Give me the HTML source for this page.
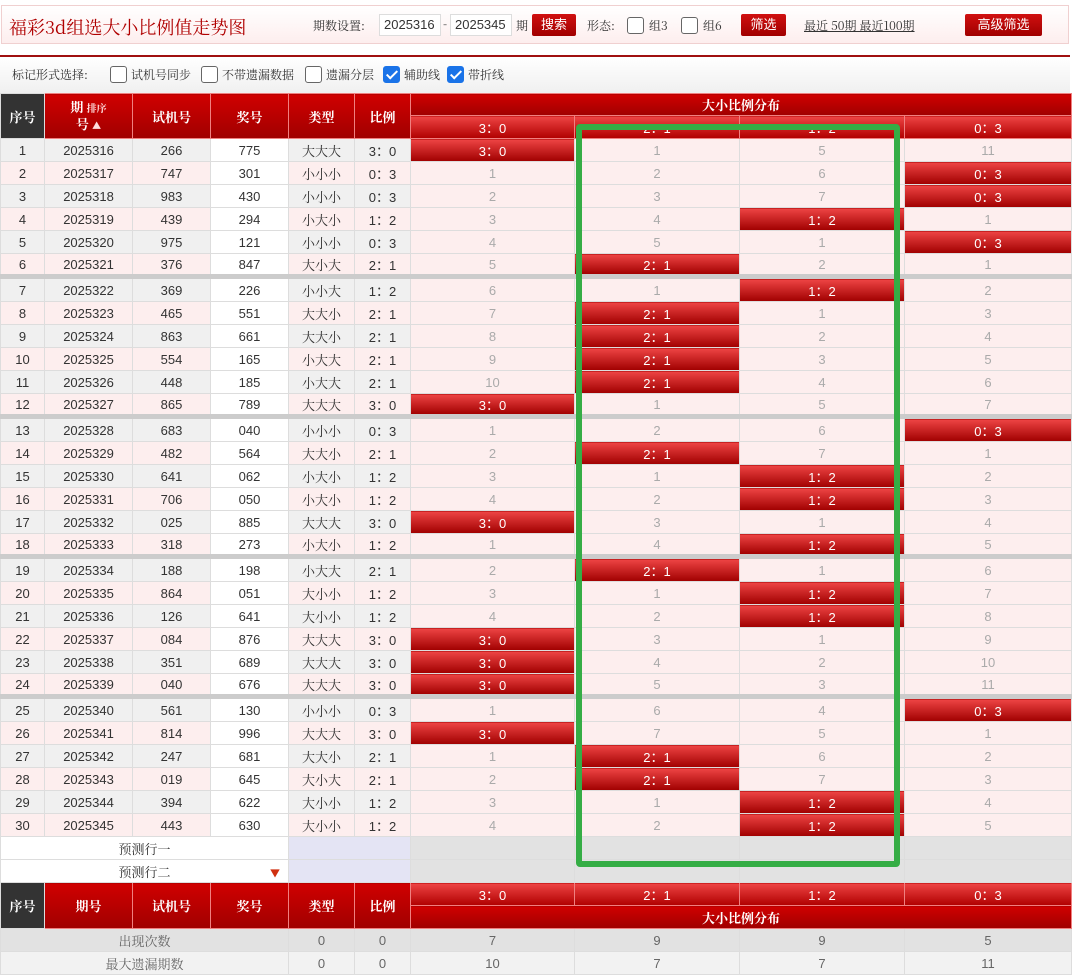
<!DOCTYPE html>
<html><head><meta charset="utf-8"><style>
*{margin:0;padding:0;box-sizing:border-box}
body{width:1080px;height:962px;overflow:hidden;background:#fff;font-family:"Liberation Sans","Noto Sans CJK SC",sans-serif;font-size:13px;color:#333;position:relative}
.top{position:absolute;left:1px;top:5px;width:1068px;height:39px;border:1px solid #f0d0d0;background:linear-gradient(#fff,#fdeeee)}
.title{position:absolute;left:7px;top:8px;font-size:18px;color:#b00000;font-family:"Noto Serif CJK SC",serif}
.t{position:absolute;top:11px;font-size:12px;color:#333;font-family:"Noto Serif CJK SC",serif}
.in{position:absolute;top:8px;height:22px;border:1px solid #ddd;background:#fff;font-size:13px;padding:2px 4px}
.btn{position:absolute;top:8px;height:22px;background:linear-gradient(#d01010,#a00000);color:#fff;font-size:13px;text-align:center;line-height:22px;border-radius:2px}
.cb{position:absolute;width:17px;height:17px;border:1px solid #666;border-radius:3px;background:#fff}
.cbc{background:#1a73e8;border-color:#1a73e8}
.cbc:after{content:"";position:absolute;left:5px;top:1px;width:4px;height:9px;border:solid #fff;border-width:0 2px 2px 0;transform:rotate(45deg)}
.line{position:absolute;left:0;top:55px;width:1070px;height:2px;background:#a01010}
.mark{position:absolute;left:0;top:57px;width:1070px;height:36px;background:linear-gradient(#fff,#f0f0f0)}
table{position:absolute;left:0;top:93px;border-collapse:collapse;table-layout:fixed;width:1071px}
td{height:23px;border:1px solid #ddd;text-align:center;font-size:13px;padding:0;white-space:nowrap;overflow:hidden}
.h{background:linear-gradient(#d00000,#a00000);color:#fff;font-weight:bold;font-family:"Noto Serif CJK SC",serif;border-color:#f08080}
.hs{background:#333;color:#fff;font-weight:bold;font-family:"Noto Serif CJK SC",serif}
.h2{background:linear-gradient(#ee4444,#b00000);color:#fff;font-weight:normal;border-color:#f08080}
tr.o td{background:#f0f0f0}
tr.e td{background:#fdeeee}
tr td.w{background:#fff}
tr td.d{background:#fdeeee;color:#aaa}
tr td.x{background:linear-gradient(#ee4444,#a00000);color:#fff;border-color:#ddd}
tr.s td{border-top:5px solid #ccc;height:25px}
.ty{font-family:"Noto Serif CJK SC",serif}
.p td{background:#fff}
.p td.lv{background:#e4e4f4}
.p td.g{background:#e2e2e2}
.f1 td{background:#e2e2e2;color:#666}
.f2 td{background:#f2f2f2;color:#666}
.green{position:absolute;left:576px;top:124px;width:324px;height:743px;border:6px solid #35ad45;border-radius:4px}
</style></head><body>
<div class="top">
<div class="title">福彩3d组选大小比例值走势图</div>
<div class="t" style="left:311px">期数设置:</div>
<div class="in" style="left:377px;width:62px">2025316</div>
<div class="t" style="left:441px;top:9px">-</div>
<div class="in" style="left:448px;width:62px">2025345</div>
<div class="t" style="left:514px">期</div>
<div class="btn" style="left:530px;width:44px">搜索</div>
<div class="t" style="left:585px">形态:</div>
<div class="cb" style="left:625px;top:11px"></div><div class="t" style="left:647px">组3</div>
<div class="cb" style="left:679px;top:11px"></div><div class="t" style="left:701px">组6</div>
<div class="btn" style="left:739px;width:45px">筛选</div>
<div class="t" style="left:802px;text-decoration:underline">最近 50期 最近100期</div>
<div class="btn" style="left:963px;width:77px">高级筛选</div>
</div>
<div class="line"></div>
<div class="mark">
<div class="t" style="left:12px;top:9px">标记形式选择:</div>
<div class="cb" style="left:110px;top:9px"></div><div class="t" style="left:131px;top:9px">试机号同步</div>
<div class="cb" style="left:201px;top:9px"></div><div class="t" style="left:222px;top:9px">不带遗漏数据</div>
<div class="cb" style="left:305px;top:9px"></div><div class="t" style="left:326px;top:9px">遗漏分层</div>
<div class="cb cbc" style="left:383px;top:9px"></div><div class="t" style="left:404px;top:9px">辅助线</div>
<div class="cb cbc" style="left:447px;top:9px"></div><div class="t" style="left:468px;top:9px">带折线</div>
</div>
<table>
<colgroup><col style="width:44px"><col style="width:88px"><col style="width:78px"><col style="width:78px"><col style="width:66px"><col style="width:56px"><col style="width:164px"><col style="width:165px"><col style="width:165px"><col style="width:167px"></colgroup>
<tr><td class="hs" rowspan="2">序号</td><td class="h" rowspan="2" style="line-height:16px">期 <span style="font-size:10px;color:#fdd">排序</span><br>号 <span style="font-size:9px;color:#fdd">▲</span></td><td class="h" rowspan="2">试机号</td><td class="h" rowspan="2">奖号</td><td class="h" rowspan="2">类型</td><td class="h" rowspan="2">比例</td><td class="h" colspan="4" style="height:22px">大小比例分布</td></tr>
<tr><td class="h2">3：0</td><td class="h2">2：1</td><td class="h2">1：2</td><td class="h2">0：3</td></tr>
<tr class="o"><td>1</td><td>2025316</td><td>266</td><td class="w">775</td><td class="ty">大大大</td><td>3：0</td><td class="x">3：0</td><td class="d">1</td><td class="d">5</td><td class="d">11</td></tr>
<tr class="e"><td>2</td><td>2025317</td><td>747</td><td class="w">301</td><td class="ty">小小小</td><td>0：3</td><td class="d">1</td><td class="d">2</td><td class="d">6</td><td class="x">0：3</td></tr>
<tr class="o"><td>3</td><td>2025318</td><td>983</td><td class="w">430</td><td class="ty">小小小</td><td>0：3</td><td class="d">2</td><td class="d">3</td><td class="d">7</td><td class="x">0：3</td></tr>
<tr class="e"><td>4</td><td>2025319</td><td>439</td><td class="w">294</td><td class="ty">小大小</td><td>1：2</td><td class="d">3</td><td class="d">4</td><td class="x">1：2</td><td class="d">1</td></tr>
<tr class="o"><td>5</td><td>2025320</td><td>975</td><td class="w">121</td><td class="ty">小小小</td><td>0：3</td><td class="d">4</td><td class="d">5</td><td class="d">1</td><td class="x">0：3</td></tr>
<tr class="e"><td>6</td><td>2025321</td><td>376</td><td class="w">847</td><td class="ty">大小大</td><td>2：1</td><td class="d">5</td><td class="x">2：1</td><td class="d">2</td><td class="d">1</td></tr>
<tr class="o s"><td>7</td><td>2025322</td><td>369</td><td class="w">226</td><td class="ty">小小大</td><td>1：2</td><td class="d">6</td><td class="d">1</td><td class="x">1：2</td><td class="d">2</td></tr>
<tr class="e"><td>8</td><td>2025323</td><td>465</td><td class="w">551</td><td class="ty">大大小</td><td>2：1</td><td class="d">7</td><td class="x">2：1</td><td class="d">1</td><td class="d">3</td></tr>
<tr class="o"><td>9</td><td>2025324</td><td>863</td><td class="w">661</td><td class="ty">大大小</td><td>2：1</td><td class="d">8</td><td class="x">2：1</td><td class="d">2</td><td class="d">4</td></tr>
<tr class="e"><td>10</td><td>2025325</td><td>554</td><td class="w">165</td><td class="ty">小大大</td><td>2：1</td><td class="d">9</td><td class="x">2：1</td><td class="d">3</td><td class="d">5</td></tr>
<tr class="o"><td>11</td><td>2025326</td><td>448</td><td class="w">185</td><td class="ty">小大大</td><td>2：1</td><td class="d">10</td><td class="x">2：1</td><td class="d">4</td><td class="d">6</td></tr>
<tr class="e"><td>12</td><td>2025327</td><td>865</td><td class="w">789</td><td class="ty">大大大</td><td>3：0</td><td class="x">3：0</td><td class="d">1</td><td class="d">5</td><td class="d">7</td></tr>
<tr class="o s"><td>13</td><td>2025328</td><td>683</td><td class="w">040</td><td class="ty">小小小</td><td>0：3</td><td class="d">1</td><td class="d">2</td><td class="d">6</td><td class="x">0：3</td></tr>
<tr class="e"><td>14</td><td>2025329</td><td>482</td><td class="w">564</td><td class="ty">大大小</td><td>2：1</td><td class="d">2</td><td class="x">2：1</td><td class="d">7</td><td class="d">1</td></tr>
<tr class="o"><td>15</td><td>2025330</td><td>641</td><td class="w">062</td><td class="ty">小大小</td><td>1：2</td><td class="d">3</td><td class="d">1</td><td class="x">1：2</td><td class="d">2</td></tr>
<tr class="e"><td>16</td><td>2025331</td><td>706</td><td class="w">050</td><td class="ty">小大小</td><td>1：2</td><td class="d">4</td><td class="d">2</td><td class="x">1：2</td><td class="d">3</td></tr>
<tr class="o"><td>17</td><td>2025332</td><td>025</td><td class="w">885</td><td class="ty">大大大</td><td>3：0</td><td class="x">3：0</td><td class="d">3</td><td class="d">1</td><td class="d">4</td></tr>
<tr class="e"><td>18</td><td>2025333</td><td>318</td><td class="w">273</td><td class="ty">小大小</td><td>1：2</td><td class="d">1</td><td class="d">4</td><td class="x">1：2</td><td class="d">5</td></tr>
<tr class="o s"><td>19</td><td>2025334</td><td>188</td><td class="w">198</td><td class="ty">小大大</td><td>2：1</td><td class="d">2</td><td class="x">2：1</td><td class="d">1</td><td class="d">6</td></tr>
<tr class="e"><td>20</td><td>2025335</td><td>864</td><td class="w">051</td><td class="ty">大小小</td><td>1：2</td><td class="d">3</td><td class="d">1</td><td class="x">1：2</td><td class="d">7</td></tr>
<tr class="o"><td>21</td><td>2025336</td><td>126</td><td class="w">641</td><td class="ty">大小小</td><td>1：2</td><td class="d">4</td><td class="d">2</td><td class="x">1：2</td><td class="d">8</td></tr>
<tr class="e"><td>22</td><td>2025337</td><td>084</td><td class="w">876</td><td class="ty">大大大</td><td>3：0</td><td class="x">3：0</td><td class="d">3</td><td class="d">1</td><td class="d">9</td></tr>
<tr class="o"><td>23</td><td>2025338</td><td>351</td><td class="w">689</td><td class="ty">大大大</td><td>3：0</td><td class="x">3：0</td><td class="d">4</td><td class="d">2</td><td class="d">10</td></tr>
<tr class="e"><td>24</td><td>2025339</td><td>040</td><td class="w">676</td><td class="ty">大大大</td><td>3：0</td><td class="x">3：0</td><td class="d">5</td><td class="d">3</td><td class="d">11</td></tr>
<tr class="o s"><td>25</td><td>2025340</td><td>561</td><td class="w">130</td><td class="ty">小小小</td><td>0：3</td><td class="d">1</td><td class="d">6</td><td class="d">4</td><td class="x">0：3</td></tr>
<tr class="e"><td>26</td><td>2025341</td><td>814</td><td class="w">996</td><td class="ty">大大大</td><td>3：0</td><td class="x">3：0</td><td class="d">7</td><td class="d">5</td><td class="d">1</td></tr>
<tr class="o"><td>27</td><td>2025342</td><td>247</td><td class="w">681</td><td class="ty">大大小</td><td>2：1</td><td class="d">1</td><td class="x">2：1</td><td class="d">6</td><td class="d">2</td></tr>
<tr class="e"><td>28</td><td>2025343</td><td>019</td><td class="w">645</td><td class="ty">大小大</td><td>2：1</td><td class="d">2</td><td class="x">2：1</td><td class="d">7</td><td class="d">3</td></tr>
<tr class="o"><td>29</td><td>2025344</td><td>394</td><td class="w">622</td><td class="ty">大小小</td><td>1：2</td><td class="d">3</td><td class="d">1</td><td class="x">1：2</td><td class="d">4</td></tr>
<tr class="e"><td>30</td><td>2025345</td><td>443</td><td class="w">630</td><td class="ty">大小小</td><td>1：2</td><td class="d">4</td><td class="d">2</td><td class="x">1：2</td><td class="d">5</td></tr>
<tr class="p"><td colspan="4" class="ty">预测行一</td><td colspan="2" class="lv"></td><td class="g"></td><td class="g"></td><td class="g"></td><td class="g"></td></tr>
<tr class="p"><td colspan="4" class="ty" style="position:relative">预测行二<span style="position:absolute;right:8px;top:5px;color:#d03010;font-size:10px">▼</span></td><td colspan="2" class="lv"></td><td class="g"></td><td class="g"></td><td class="g"></td><td class="g"></td></tr>
<tr><td class="hs" rowspan="2">序号</td><td class="h" rowspan="2">期号</td><td class="h" rowspan="2">试机号</td><td class="h" rowspan="2">奖号</td><td class="h" rowspan="2">类型</td><td class="h" rowspan="2">比例</td><td class="h2">3：0</td><td class="h2">2：1</td><td class="h2">1：2</td><td class="h2">0：3</td></tr>
<tr><td class="h" colspan="4">大小比例分布</td></tr>
<tr class="f1"><td colspan="4" class="ty">出现次数</td><td>0</td><td>0</td><td>7</td><td>9</td><td>9</td><td>5</td></tr>
<tr class="f2"><td colspan="4" class="ty">最大遗漏期数</td><td>0</td><td>0</td><td>10</td><td>7</td><td>7</td><td>11</td></tr>
</table>
<div class="green"></div>
</body></html>
